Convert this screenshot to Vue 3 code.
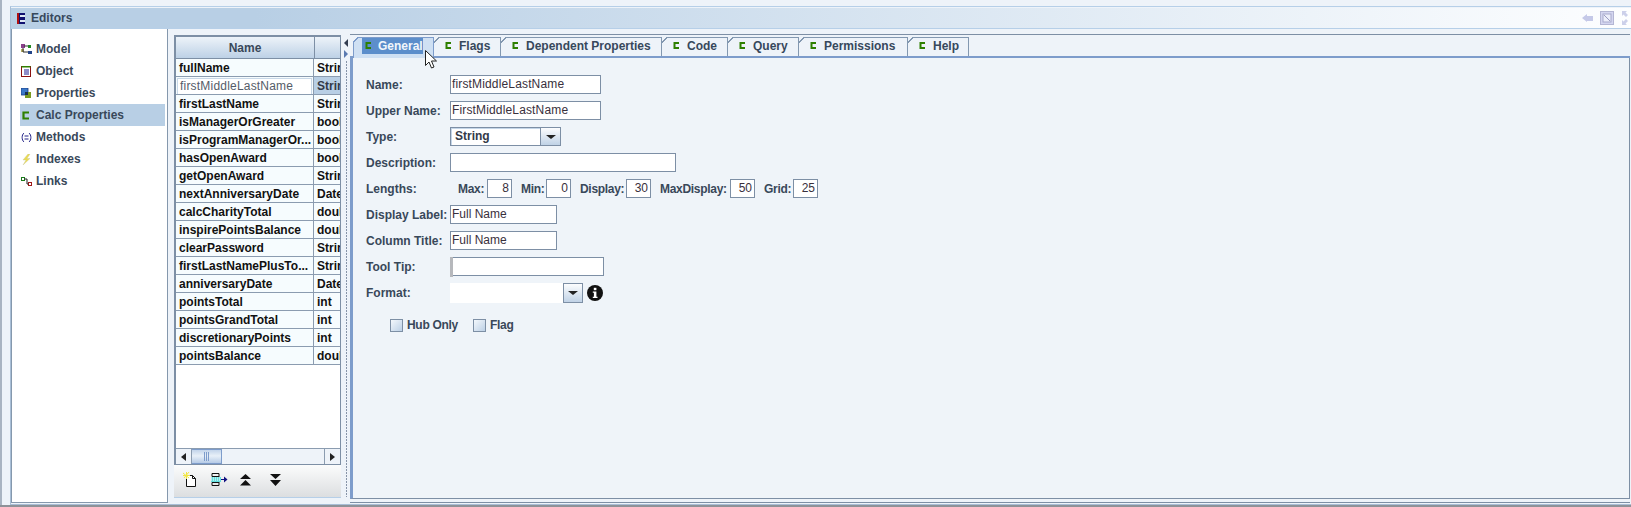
<template>
  <div class="screen">
    <div class="frame">
      <header class="title-bar">
        <svg class="logo" width="8" height="11" viewBox="0 0 8 11">
          <rect x="0" y="0" width="8" height="11" fill="#101070" />
          <rect x="0" y="0" width="2" height="11" fill="#b01010" />
          <rect x="3" y="2" width="5" height="2" fill="#dfe8f2" />
          <rect x="3" y="7" width="5" height="2" fill="#dfe8f2" />
        </svg>
        <span class="title">Editors</span>
        <div class="title-icons">
          <svg width="12" height="10" viewBox="0 0 12 10">
            <path d="M0 5 5 1v2h6v5H5v1z" fill="#c5c9e8" />
          </svg>
          <svg width="14" height="14" viewBox="0 0 14 14">
            <rect x="0.5" y="0.5" width="13" height="13" fill="#d4d6f0" stroke="#b4b6d4" />
            <rect x="3" y="3" width="8" height="8" fill="#eceefa" stroke="#a8aacc" />
            <path d="M4 4l6 6" stroke="#9a9cc4" />
          </svg>
          <svg width="10" height="14" viewBox="0 0 10 14">
            <path d="M0 0h5L3.500 1.500 6 4 4 6 1.500 3.500 0 5zM0 14V9l1.500 1.500L4 8l2 2-2.500 2.500L5 14z" fill="#ccd0ea" />
          </svg>
        </div>
      </header>

      <div class="panels">
        <nav class="nav">
          <div
            v-for="item in navItems"
            :key="item.label"
            class="nav-item"
            :class="{ 'nav-item--active': item.label === 'Calc Properties' }"
          >
            <svg class="nav-icon" width="11" height="11" viewBox="0 0 11 11" v-html="item.icon"></svg>
            <span>{{ item.label }}</span>
          </div>
        </nav>

        <section class="list-panel">
          <div class="table">
            <div class="table-head">
              <div class="head-name">Name</div>
              <div class="head-type"></div>
            </div>
            <div class="table-body">
              <div v-for="row in rows" :key="row[0]" class="row" :class="{ 'row--edit': row[0] === 'firstMiddleLastName' }">
                <div class="cell-name"><span>{{ row[0] }}</span></div>
                <div class="cell-type">{{ row[1] }}</div>
              </div>
            </div>
            <div class="hscroll">
              <div class="scroll-btn"><i class="tri tri--left"></i></div>
              <div class="scroll-thumb"><b></b><b></b><b></b></div>
              <div class="scroll-track"></div>
              <div class="scroll-btn scroll-btn--right"><i class="tri tri--right"></i></div>
            </div>
          </div>
          <div class="toolbar">
            <svg width="14" height="15" viewBox="0 0 14 15">
              <path d="M3.500 3.500h6l3 3v8h-9z" fill="#fff" stroke="#111" />
              <path d="M9.500 3.500v3h3" fill="none" stroke="#111" />
              <path d="M0 1l6 5M6 0 1 6M3.500 0v7M0 3.500h7" stroke="#f2e640" />
            </svg>
            <svg width="17" height="13" viewBox="0 0 17 13">
              <path d="M8 .5H1v3h7M8 9.500H1v3h7" fill="none" stroke="#111" />
              <path d="M8 .5v12" stroke="#111" />
              <rect x="0" y="4" width="10" height="5" fill="#63dede" />
              <path d="M0 5h10M0 7h10" stroke="#fff" stroke-dasharray="1 1" />
              <path d="M10 6.500h3" stroke="#111080" />
              <path d="M13 3.500l3.500 3-3.500 3z" fill="#111080" />
            </svg>
            <svg width="11" height="12" viewBox="0 0 11 12">
              <path d="M5.500 0 11 5H0zM5.500 6 11 11.500H0z" fill="#111" />
            </svg>
            <svg width="11" height="12" viewBox="0 0 11 12">
              <path d="M0 0h11L5.500 5zM0 6h11L5.500 12z" fill="#111" />
            </svg>
          </div>
        </section>

        <div class="splitter">
          <i class="tri tri--split-left"></i>
          <i class="tri tri--split-right"></i>
          <div class="splitter-dots"></div>
        </div>

        <section class="editor">
          <div class="tabs">
            <div
              v-for="(tab, i) in tabs"
              :key="tab.label"
              class="tab"
              :class="{ 'tab--active': i === 0 }"
              :style="{ width: tab.width + 'px' }"
            >
              <span class="tab-label">
                <svg width="7" height="8" viewBox="0 0 7 8">
                  <path d="M6 1H1.500v5H6" fill="none" stroke="#2f8000" stroke-width="2" />
                </svg>
                <span class="tab-text">{{ tab.label }}</span>
              </span>
            </div>
          </div>

          <div class="form">
            <div class="form-row">
              <label>Name:</label>
              <div class="field field--name">firstMiddleLastName</div>
            </div>
            <div class="form-row">
              <label>Upper Name:</label>
              <div class="field field--name">FirstMiddleLastName</div>
            </div>
            <div class="form-row">
              <label>Type:</label>
              <div class="combo">
                <div class="combo-value">String</div>
                <div class="combo-btn"><i class="tri tri--down"></i></div>
              </div>
            </div>
            <div class="form-row">
              <label>Description:</label>
              <div class="field field--desc"></div>
            </div>
            <div class="form-row">
              <label>Lengths:</label>
              <div class="lengths">
                <template v-for="len in lengths" :key="len.label">
                  <span class="len-label" :style="{ width: len.labelWidth + 'px' }">{{ len.label }}:</span>
                  <div class="field field--num">{{ len.value }}</div>
                </template>
              </div>
            </div>
            <div class="form-row">
              <label>Display Label:</label>
              <div class="field field--label">Full Name</div>
            </div>
            <div class="form-row">
              <label>Column Title:</label>
              <div class="field field--label">Full Name</div>
            </div>
            <div class="form-row">
              <label>Tool Tip:</label>
              <div class="field field--tip"><i class="caret"></i></div>
            </div>
            <div class="form-row">
              <label>Format:</label>
              <div class="format">
                <div class="format-value"></div>
                <div class="combo-btn combo-btn--format"><i class="tri tri--down"></i></div>
              </div>
              <svg class="info" width="16" height="16" viewBox="0 0 16 16">
                <circle cx="8" cy="8" r="8" fill="#111" />
                <rect x="6.800" y="2.800" width="2.600" height="2.400" fill="#fff" />
                <path d="M5.800 6.500h3.600v5.200h1.100v1.300H5.800v-1.300h1.100V7.800H5.800z" fill="#fff" />
              </svg>
            </div>
            <div class="checks">
              <div class="check"><i></i>Hub Only</div>
              <div class="check"><i></i>Flag</div>
            </div>
          </div>
        </section>
      </div>
    </div>

    <svg class="cursor" width="13" height="19" viewBox="0 0 13 19">
      <path d="M.5.5v15l3.500-3.500 2.500 6 2.500-1-2.500-6h5z" fill="#fff" stroke="#222" />
    </svg>
  </div>
</template>

<script setup>
const navItems = [
  {
    label: 'Model',
    icon: '<rect x="0" y="0" width="4" height="4" fill="#8a3f8a"/><rect x="0" y="5" width="3" height="3" fill="#b8b060"/><path d="M3 2h5M2 4v4h6" stroke="#333" fill="none"/><rect x="7" y="1" width="3" height="3" fill="#228822"/><rect x="7" y="7" width="4" height="3" fill="#224488"/>'
  },
  {
    label: 'Object',
    icon: '<rect x=".5" y=".5" width="9" height="10" fill="#fff" stroke="#8a1010"/><path d="M.5.5h9" stroke="#2f8000" stroke-width="2"/><path d="M3 4h5M3 6h5M3 8h5" stroke="#1a1a90"/>'
  },
  {
    label: 'Properties',
    icon: '<rect x="0" y="0" width="7" height="7" fill="#3a78c8" stroke="#1a3a80" stroke-width=".8"/><rect x="4" y="4" width="6" height="6" fill="#7a9a20"/><rect x="4" y="4" width="3" height="3" fill="#183050"/>'
  },
  {
    label: 'Calc Properties',
    icon: '<path d="M8 2.500H2.500v6H8" fill="none" stroke="#2f8000" stroke-width="2.200"/>'
  },
  {
    label: 'Methods',
    icon: '<path d="M3 1C.5 3 .5 8 3 10M8 1c2.500 2 2.500 7 0 9" fill="none" stroke="#222288"/><path d="M3.500 4h4M3.500 7h4" stroke="#222288"/>'
  },
  {
    label: 'Indexes',
    icon: '<path d="M7 0 2 6h3l-3 5 7-6.500H6l3-4.500z" fill="#ecdc50" stroke="#c8c8a0" stroke-width=".4"/>'
  },
  {
    label: 'Links',
    icon: '<rect x=".5" y="1.500" width="3" height="3" fill="#fff" stroke="#1a7a1a"/><rect x="7.500" y="6.500" width="3" height="3" fill="#fff" stroke="#a01818"/><path d="M3.500 3h2.500v5h1.500" fill="none" stroke="#222"/>'
  }
];

const rows = [
  ['fullName', 'String'],
  ['firstMiddleLastName', 'String'],
  ['firstLastName', 'String'],
  ['isManagerOrGreater', 'boolean'],
  ['isProgramManagerOr...', 'boolean'],
  ['hasOpenAward', 'boolean'],
  ['getOpenAward', 'String'],
  ['nextAnniversaryDate', 'Date'],
  ['calcCharityTotal', 'double'],
  ['inspirePointsBalance', 'double'],
  ['clearPassword', 'String'],
  ['firstLastNamePlusTo...', 'String'],
  ['anniversaryDate', 'Date'],
  ['pointsTotal', 'int'],
  ['pointsGrandTotal', 'int'],
  ['discretionaryPoints', 'int'],
  ['pointsBalance', 'double']
];

const tabs = [
  { label: 'General', width: 81 },
  { label: 'Flags', width: 67 },
  { label: 'Dependent Properties', width: 161 },
  { label: 'Code', width: 66 },
  { label: 'Query', width: 71 },
  { label: 'Permissions', width: 109 },
  { label: 'Help', width: 61 }
];

const lengths = [
  { label: 'Max', value: 8, labelWidth: 29 },
  { label: 'Min', value: 0, labelWidth: 25 },
  { label: 'Display', value: 30, labelWidth: 46 },
  { label: 'MaxDisplay', value: 50, labelWidth: 70 },
  { label: 'Grid', value: 25, labelWidth: 29 }
];
</script>

<style>
html,
body {
  margin: 0;
  background: #eef3f9;
}
</style>

<style scoped>
.screen {
  position: relative;
  width: 1631px;
  height: 507px;
  overflow: hidden;
  box-sizing: border-box;
  padding: 6px 0 0 2px;
  background: #eef3f9;
  border-bottom: 2px solid #8e9298;
  font: 12px "Liberation Sans", Arial, sans-serif;
  color: #2c3240;
}

.screen::before {
  content: '';
  position: absolute;
  left: 0;
  top: 0;
  width: 2px;
  height: 100%;
  background: #a9b4c2;
}

.frame {
  height: 499px;
  box-sizing: border-box;
  margin-left: 8px;
  border-top: 1px solid #b6cfe8;
  border-left: 1px solid #a8bed6;
  border-bottom: 1px solid #a8bed6;
}

.title-bar {
  display: flex;
  align-items: center;
  height: 21px;
  box-sizing: border-box;
  margin-top: 1px;
  padding-left: 6px;
  background: linear-gradient(90deg, #b8cfe5 0, #b8cfe5 15%, #fdfeff 100%);
  border-bottom: 1px solid #b6cfe8;
}

.title {
  margin-left: 6px;
  font-weight: bold;
  font-size: 12px;
  color: #37485c;
}

.title-icons {
  display: flex;
  align-items: center;
  gap: 8px;
  margin-left: auto;
  margin-right: -1px;
}

.title-icons svg:first-child {
  margin-right: -2px;
}

.panels {
  display: flex;
  height: 474px;
}

.nav {
  width: 157px;
  height: 474px;
  box-sizing: border-box;
  padding: 9px 2px 0 8px;
  background: #fff;
  border: solid #8598ad;
  border-width: 0 1px 1px 1px;
}

.nav-item {
  display: flex;
  align-items: center;
  height: 22px;
  padding-left: 1px;
  font-weight: bold;
  color: #39485a;
}

.nav-item--active {
  background: #b8cfe5;
}

.nav-icon {
  flex: none;
  margin-right: 4px;
}

.list-panel {
  display: flex;
  flex-direction: column;
  width: 167px;
  height: 463px;
  box-sizing: border-box;
  margin: 6px 0 0 6px;
}

.table {
  flex: none;
  width: 167px;
  height: 430px;
  box-sizing: border-box;
  display: flex;
  flex-direction: column;
  border: 2px solid #7d8fa5;
  border-right-width: 1px;
  border-bottom-width: 1px;
  background: #fff;
}

.table-head {
  display: flex;
  flex: none;
  height: 21px;
  border-bottom: 1px solid #7d8fa5;
}

.head-name,
.head-type {
  background: linear-gradient(#edf3f9, #bdd1e6);
  text-align: center;
  line-height: 23px;
  font-weight: bold;
  color: #39485a;
}

.head-name {
  flex: none;
  width: 138px;
  border-right: 1px solid #7d8fa5;
}

.head-type {
  flex: 1;
}

.table-body {
  flex: 1;
  overflow: hidden;
}

.row {
  display: flex;
  height: 18px;
  box-sizing: border-box;
  background: #f6fcfe;
  border-bottom: 1px solid #8b9cb0;
  line-height: 19px;
  font-weight: bold;
  color: #111;
}

.cell-name {
  flex: none;
  width: 138px;
  box-sizing: border-box;
  padding: 0 3px;
  border-right: 1px solid #8b9cb0;
  white-space: nowrap;
  overflow: hidden;
}

.cell-type {
  flex: 1;
  padding-left: 3px;
  white-space: nowrap;
  overflow: hidden;
}

.row--edit .cell-name {
  padding: 1px 1px 0;
}

.row--edit .cell-name span {
  display: block;
  height: 15px;
  line-height: 15px;
  padding-left: 2px;
  border: 1px solid #c8d8e8;
  background: #fff;
  font-weight: normal;
  letter-spacing: 0.2px;
  color: #555c68;
}

.row--edit .cell-type {
  background: #b8cfe5;
  color: #333a48;
}

.hscroll {
  display: flex;
  flex: none;
  height: 15px;
  background: #eef3f9;
  border-top: 1px solid #8b9cb0;
}

.scroll-btn {
  display: flex;
  flex: none;
  align-items: center;
  justify-content: center;
  width: 15px;
  background: #eef3f9;
  border-right: 1px solid #8b9cb0;
}

.scroll-btn--right {
  border-right: 0;
  border-left: 1px solid #8b9cb0;
}

.scroll-thumb {
  display: flex;
  flex: none;
  align-items: center;
  justify-content: center;
  gap: 1px;
  width: 30px;
  box-sizing: border-box;
  background: linear-gradient(#c2d4ea, #e8f0f8 45%, #b6cbe6);
  border: solid #7d9ccb;
  border-width: 1px 1px 1px 0;
}

.scroll-thumb b {
  width: 1px;
  height: 9px;
  background: #7d9ccb;
}

.scroll-track {
  flex: 1;
}

.toolbar {
  display: flex;
  align-items: center;
  flex: none;
  height: 33px;
  width: 167px;
  box-sizing: border-box;
  padding: 0 0 3px 9px;
  gap: 14px;
  background: linear-gradient(#fbfcfc, #dcdee0);
  border-bottom: 1px solid #b6cfe8;
}

.toolbar svg:nth-child(3) {
  margin-left: -2px;
  margin-right: 5px;
}

.splitter {
  display: flex;
  flex: none;
  flex-direction: column;
  width: 9px;
  height: 462px;
  box-sizing: border-box;
  margin-top: 6px;
  padding: 4px 0 0 3px;
  gap: 3px;
}

.splitter-dots {
  flex: 1;
  margin-left: 1px;
  width: 3px;
  background: radial-gradient(circle at 1.500px 1px, #8794a8 .7px, transparent .8px) 0 0 / 3px 3px repeat-y;
}

.editor {
  display: flex;
  flex-direction: column;
  flex: 1;
  height: 469px;
  box-sizing: border-box;
  margin: 5px 1px 0 0;
  padding-bottom: 3px;
  border-top: 1px solid #7d8fa5;
  border-bottom: 1px solid #7d8fa5;
}

.tabs {
  display: flex;
  flex: none;
  height: 23px;
  box-sizing: border-box;
  padding: 2px 0 0 3px;
  background: #eef3f9;
  border-bottom: 2px solid #7d9ccb;
}

.tab {
  display: flex;
  align-items: flex-start;
  flex: none;
  height: 19px;
  box-sizing: border-box;
  padding: 1px 0 0 11px;
  border-right: 1px solid #8398b0;
  background:
    linear-gradient(#8398b0, #8398b0) 5px 0 / 100% 1px no-repeat,
    linear-gradient(135deg, transparent 3.500px, #8398b0 3.500px, #8398b0 4.500px, #eef3f9 4.500px);
  font-weight: bold;
  font-size: 12px;
  color: #37485c;
}

.tab--active {
  height: 21px;
  margin-bottom: -2px;
  padding-left: 9px;
  background:
    linear-gradient(#7d9ccb, #7d9ccb) 5px 0 / 100% 1px no-repeat,
    linear-gradient(#7d9ccb, #7d9ccb) 0 5px / 1px 100% no-repeat,
    linear-gradient(135deg, transparent 3.500px, #7d9ccb 3.500px, #7d9ccb 4.500px, #cfe0f3 4.500px);
  border-right-color: #7d9ccb;
}

.tab-label {
  display: inline-flex;
  align-items: center;
  gap: 7px;
  height: 16px;
}

.tab--active .tab-label {
  gap: 6px;
  padding-left: 3px;
  background: #5c8ecb;
  color: #f1f6fb;
}

.form {
  flex: 1;
  box-sizing: border-box;
  padding: 17px 0 0 13px;
  background: #eff4f9;
  border: 1px solid #7d8fa5;
  border-top: 0;
  border-left: 3px solid #7d9ccb;
}

.form-row {
  display: flex;
  align-items: center;
  height: 19px;
  margin-bottom: 7px;
}

.form-row label {
  flex: none;
  width: 84px;
  font-weight: bold;
  color: #39485a;
}

.field {
  flex: none;
  height: 19px;
  box-sizing: border-box;
  padding: 0 1px;
  background: #fff;
  border: 1px solid #7d8fa5;
  line-height: 17px;
  color: #39303c;
  white-space: nowrap;
}

.field--name {
  width: 151px;
  letter-spacing: 0.15px;
}

.field--desc {
  width: 226px;
}

.field--label {
  width: 107px;
}

.field--tip {
  position: relative;
  width: 154px;
}

.caret {
  position: absolute;
  left: -1px;
  top: -1px;
  width: 3px;
  height: 20px;
  background: #b6b8bc;
}

.field--num {
  width: 25px;
  padding-right: 2px;
  text-align: right;
  font-size: 12px;
}

.lengths {
  display: flex;
  align-items: center;
  margin-left: 8px;
}

.len-label {
  flex: none;
  margin-left: 9px;
  font-weight: bold;
  letter-spacing: -0.3px;
  white-space: nowrap;
  color: #39485a;
}

.len-label:first-child {
  margin-left: 0;
}

.combo {
  display: flex;
  width: 111px;
  height: 19px;
  box-sizing: border-box;
  background: #fff;
  border: 1px solid #7d8fa5;
}

.combo-value {
  flex: 1;
  padding-left: 4px;
  font-weight: bold;
  line-height: 16px;
  color: #333a48;
  box-shadow: inset 1px 1px 0 #c5d6e8;
}

.combo-btn {
  display: flex;
  flex: none;
  align-items: center;
  justify-content: center;
  width: 19px;
  background: linear-gradient(#fcfdfe, #c0d2e6);
  border-left: 1px solid #7d8fa5;
}

.combo-btn--format {
  width: 20px;
  box-sizing: border-box;
  border: 1px solid #7d8fa5;
}

.format {
  display: flex;
  width: 133px;
  height: 20px;
}

.format-value {
  flex: 1;
  background: #fff;
}

.info {
  margin-left: 4px;
}

.checks {
  display: flex;
  gap: 15px;
  margin: 16px 0 0 24px;
}

.check {
  display: flex;
  align-items: center;
  font-weight: bold;
  letter-spacing: -0.3px;
  color: #39485a;
}

.check i {
  width: 13px;
  height: 13px;
  box-sizing: border-box;
  margin-right: 4px;
  background: linear-gradient(135deg, #f4f8fc, #bcd0e6);
  border: 1px solid #7d8fa5;
}

.tri {
  display: block;
  width: 0;
  height: 0;
  border-style: solid;
  border-color: transparent;
}

.tri--left {
  border-width: 4px 5px 4px 0;
  border-right-color: #222;
}

.tri--right {
  border-width: 4px 0 4px 5px;
  border-left-color: #222;
}

.tri--down {
  border-width: 4px 5px 0 5px;
  border-top-color: #222;
}

.tri--split-left {
  border-width: 4px 4px 4px 0;
  border-right-color: #333d50;
}

.tri--split-right {
  border-width: 4px 0 4px 4px;
  border-left-color: #5a7ab0;
}

.cursor {
  position: absolute;
  left: 425px;
  top: 50px;
}
</style>
